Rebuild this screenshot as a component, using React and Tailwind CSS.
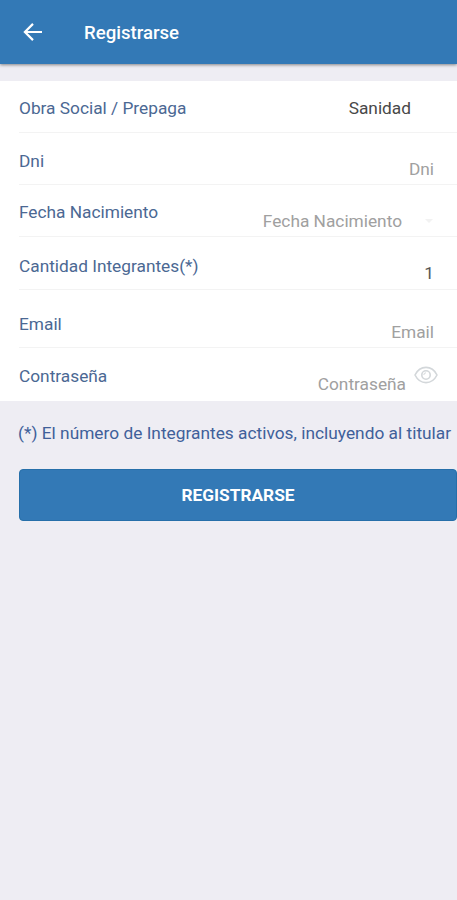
import React from 'react';

const FIELDS = [
    { label: 'Obra Social / Prepaga', value: 'Sanidad', row: 'h-[52px]', labelPad: 'pt-[15px]', valueClass: 'pt-[15px] pr-[46px] text-[#484848]' },
    { label: 'Dni', value: 'Dni', row: 'h-[52px]', labelPad: 'pt-4', valueClass: 'pt-6 pr-[23px] text-[#a0a0a0]' },
    { label: 'Fecha Nacimiento', value: 'Fecha Nacimiento', row: 'h-[52px]', labelPad: 'pt-[15px]', valueClass: 'pt-6 text-[#a0a0a0]', icon: 'caret' },
    { label: 'Cantidad Integrantes(*)', value: '1', row: 'h-[53px]', labelPad: 'pt-[17px]', valueClass: 'pt-6 pr-[23px] text-[#555]' },
    { label: 'Email', value: 'Email', row: 'h-[58px]', labelPad: 'pt-[22px]', valueClass: 'pt-[30px] pr-[23px] text-[#a0a0a0]' },
    { label: 'Contraseña', value: 'Contraseña', row: 'h-[53px]', labelPad: 'pt-4', valueClass: 'pt-6 text-[#a0a0a0]', icon: 'eye' },
];

const BackArrow = () => (
    <svg className="w-[19px] h-[18px]" viewBox="0 0 19 18" fill="none" stroke="currentColor" strokeWidth="2.2">
        <path d="M19 9H1.8M10 .9 1.9 9l8.1 8.1" />
    </svg>
);

const Caret = () => (
    <svg className="w-2 h-1 mt-[34px] ml-[23px] mr-6 text-[#f2f2f2]" viewBox="0 0 8 4" fill="currentColor">
        <path d="M0 0h8L4 4z" />
    </svg>
);

const Eye = () => (
    <svg className="w-6 h-[18px] mt-[18px] ml-2 mr-[19px] text-[#d3d7da]" viewBox="0 0 24 18" fill="none" stroke="currentColor" strokeWidth="1.6">
        <path d="M1 9c2.4-4.8 6.2-7.6 11-7.6S20.6 4.2 23 9c-2.4 4.8-6.2 7.6-11 7.6S3.4 13.8 1 9z" />
        <circle cx="12" cy="9" r="4.2" />
        <path d="M9.8 9A2.2 2.2 0 0 1 12 6.8" strokeWidth="1" />
    </svg>
);

const Field = ({ field, last }) => (
    <div className={`flex items-start justify-between ml-[19px] leading-6 ${field.row} ${last ? '' : 'border-b border-[#f3f3f3]'}`}>
        <span className={`text-[#4b6893] ${field.labelPad}`}>{field.label}</span>
        <div className="flex items-start">
            <span className={field.valueClass}>{field.value}</span>
            {field.icon === 'caret' && <Caret />}
            {field.icon === 'eye' && <Eye />}
        </div>
    </div>
);

const App = () => {
    return (
        <div className="w-full min-h-screen bg-[#eeedf3] overflow-hidden font-['Roboto',sans-serif] text-[17.3px] whitespace-nowrap">
            <header className="flex items-center h-16 pl-[23px] bg-[#3379b6] text-white shadow-[0_1px_3px_rgba(0,0,0,0.45)]">
                <button type="button" aria-label="Volver">
                    <BackArrow />
                </button>
                <h1 className="ml-[42px] pt-px text-[18.6px] leading-6 font-medium">Registrarse</h1>
            </header>

            <section className="mt-[17px] bg-white">
                {FIELDS.map((field, i) => (
                    <Field key={field.label} field={field} last={i === FIELDS.length - 1} />
                ))}
            </section>

            <p className="mt-5 ml-[18px] leading-6 text-[#40609a] tracking-[0.015px]">
                (*) El número de Integrantes activos, incluyendo al titular
            </p>

            <button type="button" className="block w-[438px] h-[52px] mt-6 ml-[19px] pt-0.5 rounded-[4px] bg-[#3379b6] border border-[#266fa9] text-white font-bold">
                REGISTRARSE
            </button>
        </div>
    );
};

export default App;
